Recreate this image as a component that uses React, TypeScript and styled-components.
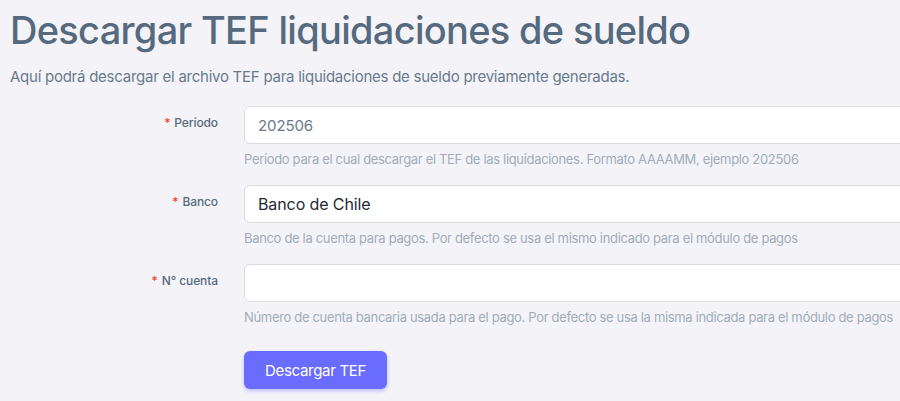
import React from "react";
import styled, { createGlobalStyle } from "styled-components";

const GlobalStyle = createGlobalStyle`
  html, body { margin: 0; padding: 0; background: #f4f4f8; overflow: hidden; }
  body { font-family: "Inter", "Noto Sans", "Liberation Sans", sans-serif; }
  * { box-sizing: border-box; }
`;

const Page = styled.div`
  padding: 6px 0 0 10px;
  width: 900px;
  height: 401px;
  overflow: hidden;
`;

const Title = styled.h1`
  margin: 0;
  font-size: 38px;
  font-weight: 500;
  line-height: 48px;
  color: #566a7f;
  letter-spacing: -0.7px;
`;

const Subtitle = styled.p`
  margin: 12px 0 0;
  font-size: 15px;
  line-height: 22px;
  color: #697a8d;
  letter-spacing: -0.25px;
`;

const Form = styled.form`
  margin: 18px 0 0 -10px;
  display: flex;
  flex-direction: column;
`;

const Row = styled.div<{ $mb?: number }>`
  display: grid;
  grid-template-columns: 218px 720px;
  column-gap: 26px;
  margin-bottom: ${(p) => p.$mb ?? 16}px;
`;

const Label = styled.label`
  text-align: right;
  padding-top: 8px;
  font-size: 12px;
  line-height: 18px;
  font-weight: 500;
  color: #566a7f;
  letter-spacing: -0.1px;
`;

const Req = styled.span`
  color: #ff3e1d;
  margin-right: 4px;
`;

const Field = styled.div`
  display: flex;
  flex-direction: column;
`;

const Input = styled.input<{ $muted?: boolean }>`
  height: 38px;
  width: 100%;
  padding: 7px 13px;
  border: 1px solid #d9dee3;
  border-radius: 6px;
  background: #fff;
  font-family: inherit;
  font-size: ${(p) => (p.$muted ? 15 : 16)}px;
  letter-spacing: -0.1px;
  color: ${(p) => (p.$muted ? "#697a8d" : "#1f2937")};
  outline: none;
`;

const Help = styled.div`
  margin-top: 5px;
  font-size: 13px;
  line-height: 20px;
  color: #a1acb8;
  letter-spacing: -0.33px;
  white-space: nowrap;
`;

const Button = styled.button`
  width: 143px;
  height: 38px;
  border: none;
  border-radius: 6px;
  background: #696cff;
  color: #fff;
  font-family: inherit;
  font-size: 15px;
  font-weight: 400;
  letter-spacing: -0.3px;
  box-shadow: 0 2px 4px 0 rgba(105, 108, 255, 0.4);
  cursor: pointer;
`;

export default function App() {
  return (
    <>
      <GlobalStyle />
      <Page>
        <Title>Descargar TEF liquidaciones de sueldo</Title>
        <Subtitle>
          Aquí podrá descargar el archivo TEF para liquidaciones de sueldo previamente generadas.
        </Subtitle>
        <Form onSubmit={(e) => e.preventDefault()}>
          <Row>
            <Label>
              <Req>*</Req>Período
            </Label>
            <Field>
              <Input $muted defaultValue="202506" />
              <Help>
                Período para el cual descargar el TEF de las liquidaciones. Formato AAAAMM, ejemplo 202506
              </Help>
            </Field>
          </Row>
          <Row>
            <Label>
              <Req>*</Req>Banco
            </Label>
            <Field>
              <Input defaultValue="Banco de Chile" />
              <Help>
                Banco de la cuenta para pagos. Por defecto se usa el mismo indicado para el módulo de pagos
              </Help>
            </Field>
          </Row>
          <Row $mb={24}>
            <Label>
              <Req>*</Req>N° cuenta
            </Label>
            <Field>
              <Input defaultValue="" />
              <Help>
                Número de cuenta bancaria usada para el pago. Por defecto se usa la misma indicada para el módulo de pagos
              </Help>
            </Field>
          </Row>
          <Row>
            <div />
            <div>
              <Button type="submit">Descargar TEF</Button>
            </div>
          </Row>
        </Form>
      </Page>
    </>
  );
}
